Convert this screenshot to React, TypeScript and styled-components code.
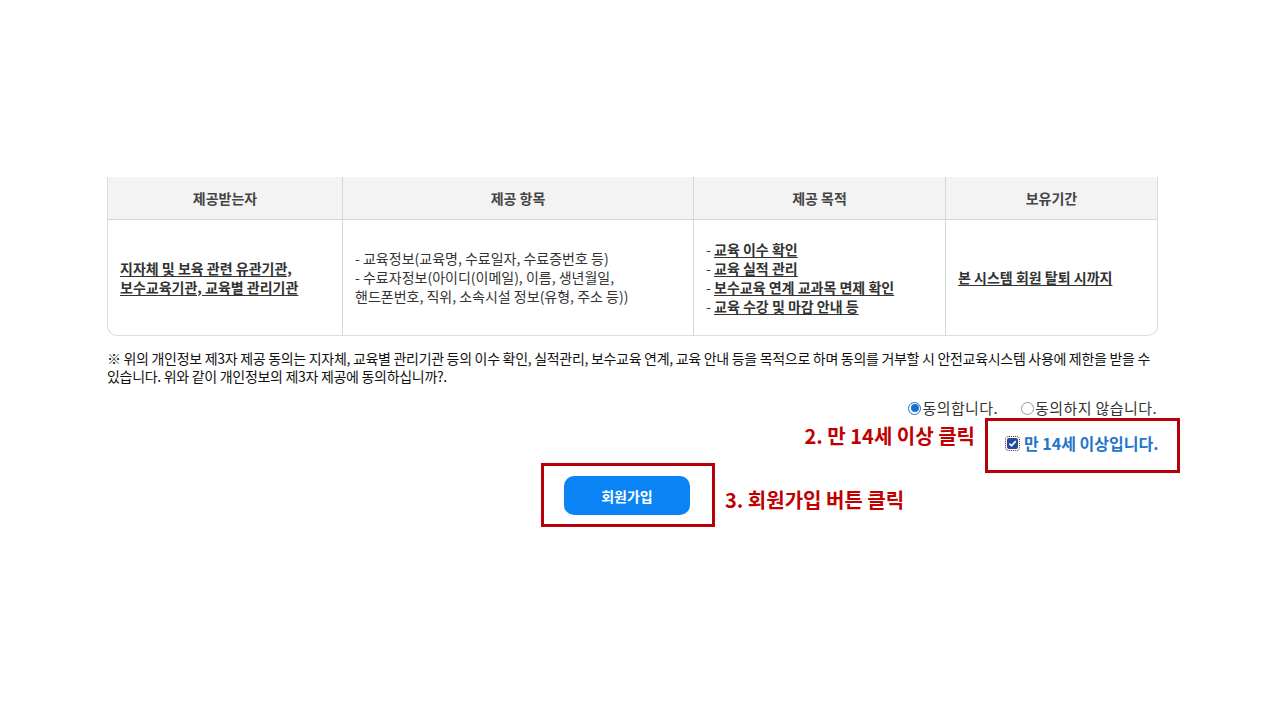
import React from "react";
import styled, { createGlobalStyle } from "styled-components";

const Global = createGlobalStyle`
  html, body { margin: 0; padding: 0; background: #fff; }
  body { font-family: "Noto Sans CJK KR", "Noto Sans", sans-serif; color: #333; }
`;

const Page = styled.div`
  width: 1050px;
  padding: 177px 0 0 107px;
`;

const Table = styled.div`
  display: grid;
  grid-template-columns: 235px 351px 252px 211px;
  border: 1px solid #dcdcdc;
  border-top: none;
  border-radius: 0 0 10px 10px;
  overflow: hidden;
  width: 1049px;
`;

const HeadCell = styled.div<{ $last?: boolean }>`
  height: 42px;
  display: flex;
  align-items: center;
  justify-content: center;
  background: #f3f3f4;
  border-bottom: 1px solid #d6d6d6;
  border-right: ${(p) => (p.$last ? "none" : "1px solid #d6d6d6")};
  font-size: 14px;
  font-weight: 700;
  color: #444;
`;

const BodyCell = styled.div<{ $last?: boolean }>`
  height: 115px;
  display: flex;
  flex-direction: column;
  justify-content: center;
  padding: 0 12px;
  border-right: ${(p) => (p.$last ? "none" : "1px solid #d6d6d6")};
  font-size: 14px;
  line-height: 19px;
  color: #333;
`;

const Strong = styled.span`
  text-decoration: underline;
  text-underline-offset: 2px;
  font-weight: 700;
  color: #333;
`;

const Notice = styled.p`
  margin: 13px 0 0 0;
  font-size: 14px;
  line-height: 18px;
  color: #111;
  letter-spacing: -0.3px;
  white-space: nowrap;
`;

const RadioRow = styled.div`
  display: flex;
  justify-content: flex-end;
  gap: 23px;
  margin-top: 13px;
  font-size: 15px;
  letter-spacing: 0.4px;
  line-height: 20px;
  color: #333;
`;

const RadioLabel = styled.label`
  display: flex;
  align-items: center;
  gap: 1px;
`;

const RadioDot = styled.span<{ $on?: boolean }>`
  flex-shrink: 0;
  width: 13px;
  height: 13px;
  border-radius: 50%;
  box-sizing: border-box;
  border: 1px solid ${(p) => (p.$on ? "#1a6fc9" : "#9a9a9a")};
  display: inline-flex;
  align-items: center;
  justify-content: center;
  &::after {
    content: "";
    width: 8px;
    height: 8px;
    border-radius: 50%;
    background: ${(p) => (p.$on ? "#1a6fc9" : "transparent")};
  }
`;

const AnnoRow = styled.div`
  display: flex;
  justify-content: flex-end;
  align-items: flex-start;
  gap: 10px;
  margin-top: 0;
  margin-right: -23px;
`;

const RedLabel = styled.div<{ $top?: number }>`
  font-size: 20px;
  font-weight: 700;
  color: #c00000;
  line-height: 26px;
  margin-top: ${(p) => p.$top ?? 0}px;
  white-space: nowrap;
`;

const RedBox = styled.div`
  border: 3px solid #b8000a;
  box-sizing: border-box;
`;

const CheckBox = styled(RedBox)`
  width: 195px;
  height: 55px;
  padding: 12px 0 0 19px;
`;

const CheckLine = styled.div`
  display: flex;
  align-items: center;
  gap: 6px;
  font-size: 16px;
  font-weight: 700;
  color: #1f74cc;
  line-height: 20px;
`;

const FakeCheck = styled.span`
  flex-shrink: 0;
  width: 11px;
  height: 11px;
  border-radius: 2px;
  background: #1a4e9c;
  outline: 1px dotted #7a1020;
  outline-offset: 1px;
  display: inline-flex;
  align-items: center;
  justify-content: center;
`;

const ButtonRow = styled.div`
  display: flex;
  align-items: flex-start;
  gap: 10px;
  margin-top: -10px;
  margin-left: 434px;
`;

const ButtonBox = styled(RedBox)`
  width: 174px;
  height: 64px;
  padding: 10px 0 0 20px;
`;

const JoinButton = styled.button`
  width: 126px;
  height: 39px;
  border: none;
  border-radius: 10px;
  background: #0a84f5;
  color: #fff;
  font-family: "Noto Sans CJK KR", sans-serif;
  font-size: 14px;
  font-weight: 700;
  cursor: pointer;
`;

export default function App() {
  return (
    <>
      <Global />
      <Page>
        <Table>
          <HeadCell>제공받는자</HeadCell>
          <HeadCell>제공 항목</HeadCell>
          <HeadCell>제공 목적</HeadCell>
          <HeadCell $last>보유기간</HeadCell>
          <BodyCell>
            <div>
              <Strong>지자체 및 보육 관련 유관기관,</Strong>
            </div>
            <div>
              <Strong>보수교육기관, 교육별 관리기관</Strong>
            </div>
          </BodyCell>
          <BodyCell>
            <div>- 교육정보(교육명, 수료일자, 수료증번호 등)</div>
            <div>- 수료자정보(아이디(이메일), 이름, 생년월일,</div>
            <div>핸드폰번호, 직위, 소속시설 정보(유형, 주소 등))</div>
          </BodyCell>
          <BodyCell>
            <div>
              - <Strong>교육 이수 확인</Strong>
            </div>
            <div>
              - <Strong>교육 실적 관리</Strong>
            </div>
            <div>
              - <Strong>보수교육 연계 교과목 면제 확인</Strong>
            </div>
            <div>
              - <Strong>교육 수강 및 마감 안내 등</Strong>
            </div>
          </BodyCell>
          <BodyCell $last>
            <div>
              <Strong>본 시스템 회원 탈퇴 시까지</Strong>
            </div>
          </BodyCell>
        </Table>
        <Notice>
          ※ 위의 개인정보 제3자 제공 동의는 지자체, 교육별 관리기관 등의 이수 확인, 실적관리, 보수교육 연계, 교육 안내 등을 목적으로 하며 동의를 거부할 시 안전교육시스템 사용에 제한을 받을 수
          <br />
          있습니다. 위와 같이 개인정보의 제3자 제공에 동의하십니까?.
        </Notice>
        <RadioRow>
          <RadioLabel>
            <RadioDot $on />
            동의합니다.
          </RadioLabel>
          <RadioLabel>
            <RadioDot />
            동의하지 않습니다.
          </RadioLabel>
        </RadioRow>
        <AnnoRow>
          <RedLabel $top={5}>2. 만 14세 이상 클릭</RedLabel>
          <CheckBox>
            <CheckLine>
              <FakeCheck>
                <svg width="9" height="9" viewBox="0 0 10 10">
                  <path d="M1.5 5.2 L4 7.6 L8.6 2.4" stroke="#fff" strokeWidth="1.8" fill="none" />
                </svg>
              </FakeCheck>
              만 14세 이상입니다.
            </CheckLine>
          </CheckBox>
        </AnnoRow>
        <ButtonRow>
          <ButtonBox>
            <JoinButton>회원가입</JoinButton>
          </ButtonBox>
          <RedLabel $top={24}>3. 회원가입 버튼 클릭</RedLabel>
        </ButtonRow>
      </Page>
    </>
  );
}
